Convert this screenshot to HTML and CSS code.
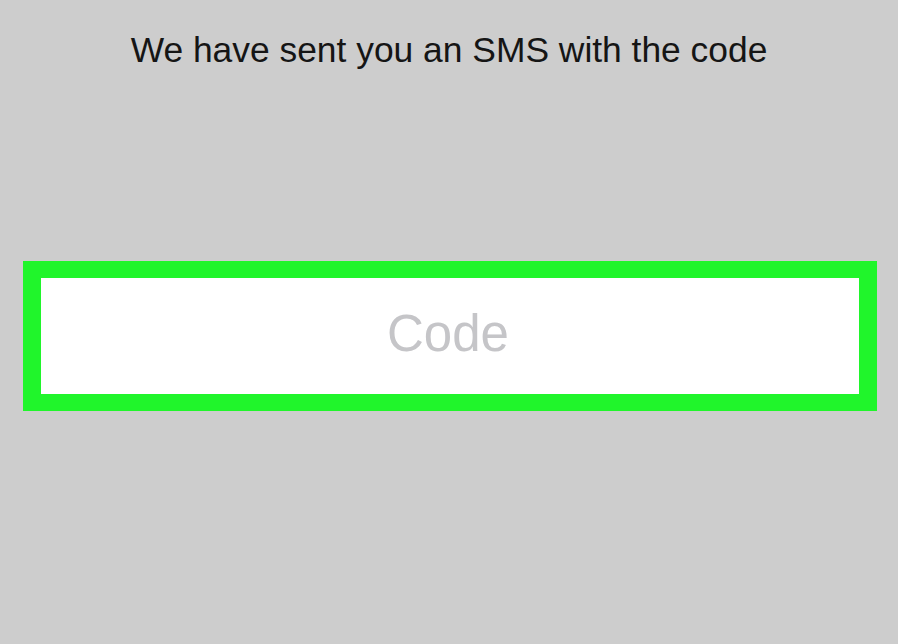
FILE: index.html
```html
<!DOCTYPE html>
<html lang="en">
<head>
    <meta charset="UTF-8">
    <meta name="viewport" content="width=device-width, initial-scale=1.0">
    <title>Verify phone</title>
    <link rel="stylesheet" href="styles.css">
</head>
<body>
    <div class="verify-screen">
        <p class="verify-message">We have sent you an SMS with the code</p>
        <div class="code-field">
            <input type="text" class="code-input" placeholder="Code">
        </div>
    </div>
</body>
</html>
```

FILE: styles.css
```css
body {
    font-family: "Liberation Sans", Arial, sans-serif;
    margin: 0;
    padding: 0;
    background-color: #cdcdcd;
    height: 100vh;
}
.verify-screen {
    display: flex;
    flex-direction: column;
    padding-top: 28px;
}
.verify-message {
    margin: 0;
    text-align: center;
    font-size: 35.4px;
    line-height: 44px;
    color: #151515;
}
.code-field {
    margin: 189px 21px 0 23px;
    border-style: solid;
    border-color: #20f52b;
    border-width: 17px 18px 17px 18px;
    background: #fff;
    height: 116px;
    display: flex;
}
.code-input {
    flex-grow: 1;
    border: none;
    outline: none;
    background: transparent;
    text-align: center;
    font-family: "Liberation Sans", Arial, sans-serif;
    font-size: 51px;
    padding: 0 4px 6px 0;
    color: #333;
}
.code-input::placeholder {
    color: #c5c5c8;
}
```
